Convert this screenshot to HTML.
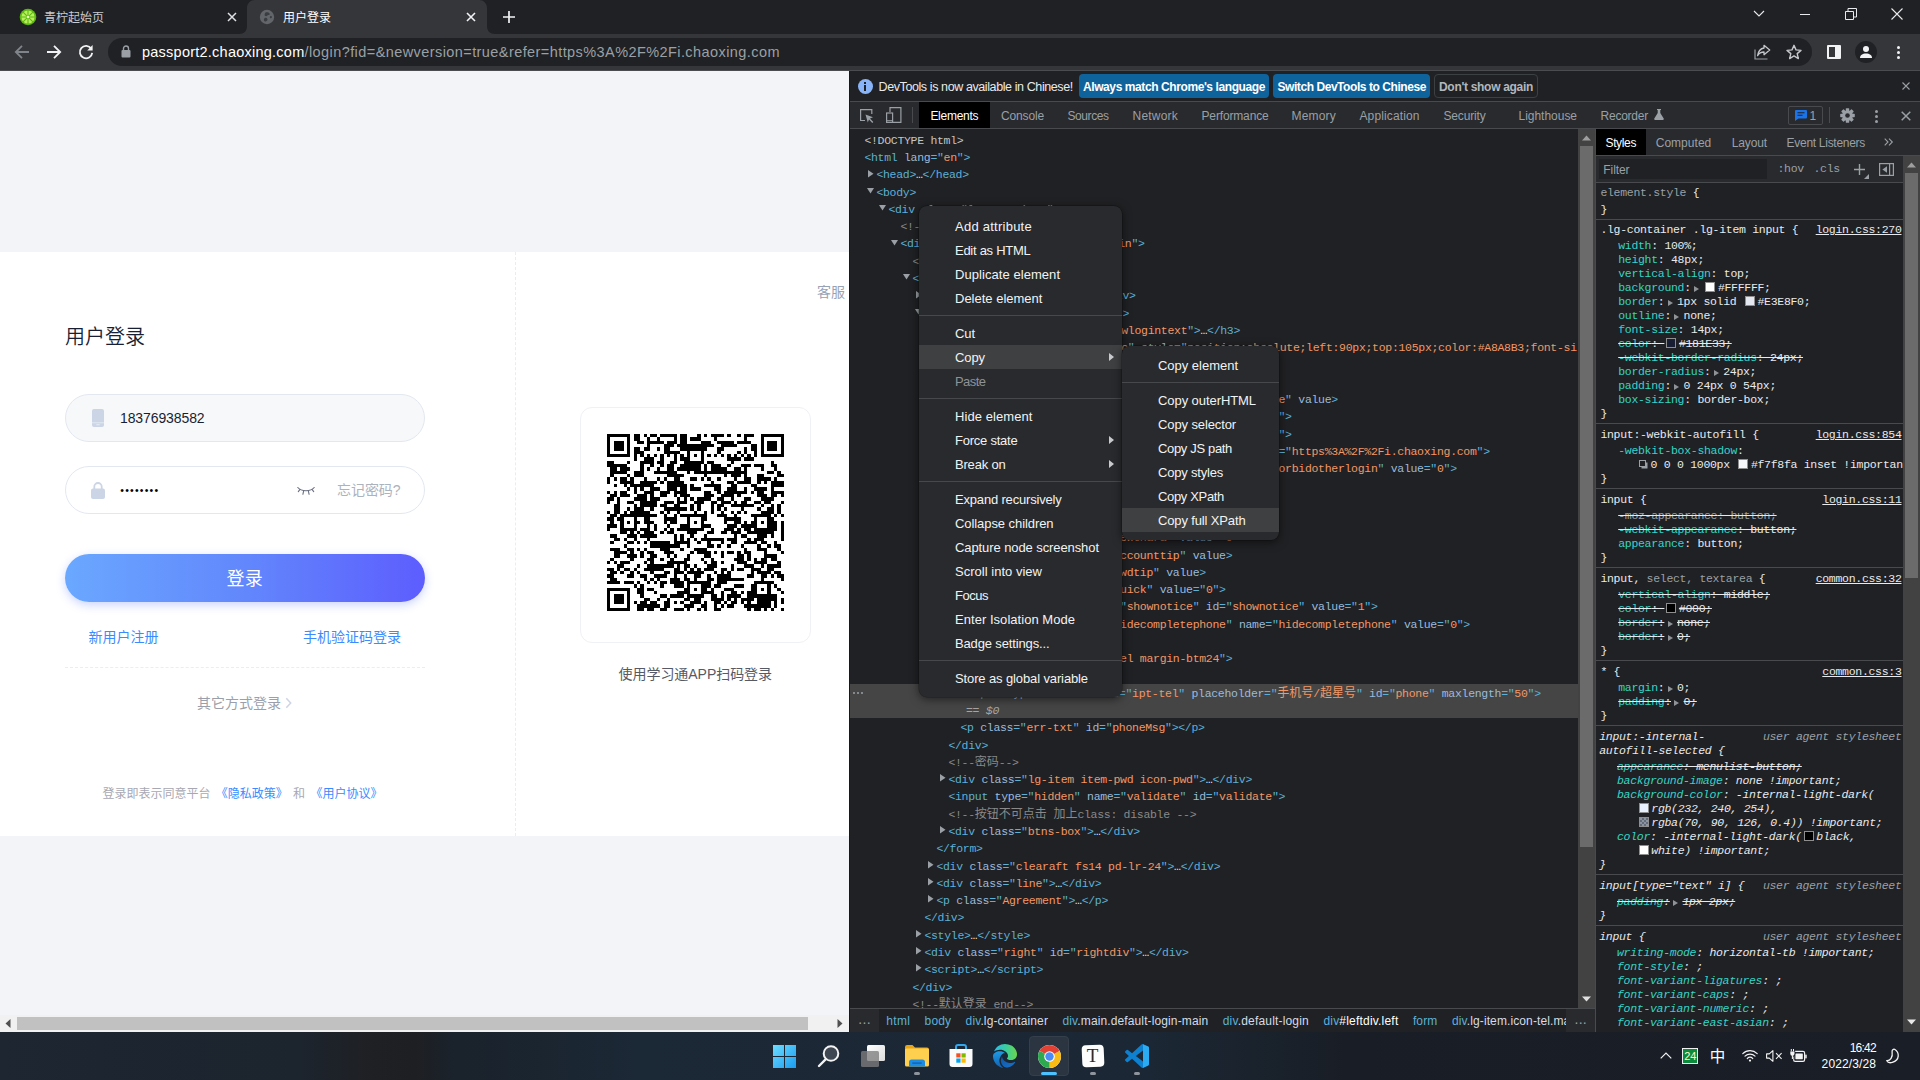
<!DOCTYPE html>
<html lang="zh-CN">
<head>
<meta charset="utf-8">
<title>用户登录</title>
<style>
*{margin:0;padding:0;box-sizing:content-box}
html,body{width:1920px;height:1080px;overflow:hidden;background:#202124}
body{position:relative;font-family:"Liberation Sans","Noto Sans CJK SC",sans-serif;font-size:12px;color:#e8eaed}
.abs{position:absolute;display:block}
.t{position:absolute;white-space:pre;display:block}
svg{overflow:visible}

.mono{font-family:"Liberation Mono","Noto Sans CJK SC",monospace;font-size:11.500px;letter-spacing:-.300px;white-space:pre}
.ln{position:absolute;height:17.28px;line-height:17.28px;color:#e8eaed}
.sl{position:absolute;height:14px;line-height:14px;color:#e8eaed}
.tg{color:#5db0d7}.an{color:#9bbbdc}.av{color:#f29766}.cm{color:#898989}.dt{color:#c4c4c4}
.cj{font-size:12px;letter-spacing:0;display:inline-block;width:12px;line-height:14px;vertical-align:baseline}
.pn{color:#35d4c7}.gy{color:#9aa0a6}.st{text-decoration:line-through}
.tri{display:inline-block;width:0;height:0;border-style:solid;border-color:transparent transparent transparent #8f9398;border-width:3.5px 0 3.5px 5.5px;margin:0 4.500px 0 3.100px;vertical-align:-0.500px}
.sw{display:inline-block;width:8px;height:8px;border:1px solid #8e8e8e;margin:0 2.500px 0 2px;vertical-align:-1px}
.lk{text-decoration:underline;color:#e8eaed}
.ua{font-style:italic;color:#9aa0a6}
.it{font-style:italic}
.sl.it{margin-left:-1.200px}
</style>
</head>
<body>
<!-- chrome -->
<div class="abs" style="left:0;top:0;width:1920px;height:34px;background:#202124"></div>
<div class="abs" style="left:0;top:34px;width:1920px;height:36px;background:#35363a"></div>
<div class="abs" style="left:0;top:70px;width:1920px;height:1px;background:#4b4c50"></div>
<svg class="abs" style="left:239px;top:0" width="256" height="34" viewBox="0 0 256 34"><path d="M0 34 C5 34 8 31 8 26 V8 C8 3.5 11.5 0 16 0 H240 C244.5 0 248 3.5 248 8 V26 C248 31 251 34 256 34 Z" fill="#35363a"/></svg>
<svg class="abs" style="left:19px;top:8px" width="18" height="18" viewBox="0 0 18 18"><circle cx="9" cy="9" r="8.3" fill="#5cb811"/><circle cx="9" cy="9" r="6.6" fill="#b9ef5c"/><g stroke="#5cb811" stroke-width="1.1"><path d="M9 2v14M2 9h14M4.05 4.05l9.9 9.9M13.95 4.05l-9.9 9.9"/></g><circle cx="9" cy="9" r="1.3" fill="#e9ffc0"/></svg>
<span class="t" style="left:44.0px;top:9.8px;font-size:12px;line-height:17px;color:#c8ccd1;">青柠起始页</span>
<svg class="abs" style="left:227px;top:12px" width="10" height="10" viewBox="0 0 10 10"><path d="M1 1l8 8M9 1l-8 8" stroke="#dfe1e5" stroke-width="1.5"/></svg>
<svg class="abs" style="left:259px;top:9px" width="16" height="16" viewBox="0 0 16 16"><circle cx="8" cy="8" r="7.200" fill="#62666b"/><path d="M7 3.300c1.300-.400 2.900.100 3.600 1.100.500.900-.400 1.600-1.400 1.700-.900.200-1.200 1.100-2.100 1.200-.900 0-1.700-.700-1.500-1.700.200-.900.500-2 1.400-2.300z" fill="#3b3d41"/><path d="M6.400 8.700c1-.100 2 .500 2.100 1.500.100 1-.600 1.900-1.600 2.200-.900.200-1.800-.300-2-1.200-.200-.900.400-2.300 1.500-2.500z" fill="#3b3d41"/><path d="M11.600 6.900c.700-.100 1.400.400 1.400 1.100 0 .700-.600 1.300-1.300 1.200-.600-.100-1-.700-.900-1.300.100-.500.400-.900.800-1z" fill="#3b3d41"/></svg>
<span class="t" style="left:283.0px;top:9.8px;font-size:12px;line-height:17px;color:#ffffff;">用户登录</span>
<svg class="abs" style="left:466px;top:12px" width="10" height="10" viewBox="0 0 10 10"><path d="M1 1l8 8M9 1l-8 8" stroke="#f1f3f4" stroke-width="1.6"/></svg>
<svg class="abs" style="left:503px;top:11px" width="12" height="12" viewBox="0 0 12 12"><path d="M6 0v12M0 6h12" stroke="#f1f3f4" stroke-width="1.7"/></svg>
<svg class="abs" style="left:1753px;top:9px" width="12" height="10" viewBox="0 0 12 10"><path d="M1 2l5 5 5-5" fill="none" stroke="#e8eaed" stroke-width="1.1"/></svg>
<div class="abs" style="left:1800px;top:14px;width:10px;height:1px;background:#e8eaed"></div>
<svg class="abs" style="left:1845px;top:8px" width="12" height="12" viewBox="0 0 12 12"><path d="M.5 3.500h8v8h-8zM3 3.500v-3h8.500v8.500h-3" fill="none" stroke="#e8eaed" stroke-width="1"/></svg>
<svg class="abs" style="left:1891px;top:8px" width="12" height="12" viewBox="0 0 12 12"><path d="M.5.500l11 11M11.500.500l-11 11" stroke="#e8eaed" stroke-width="1.1"/></svg>
<svg class="abs" style="left:14px;top:44px" width="16" height="16" viewBox="0 0 16 16"><path d="M15 8H2.500M8 1.800L1.800 8 8 14.200" fill="none" stroke="#80858b" stroke-width="1.8"/></svg>
<svg class="abs" style="left:46px;top:44px" width="16" height="16" viewBox="0 0 16 16"><path d="M1 8h12.500M8 1.800L14.200 8 8 14.200" fill="none" stroke="#f1f3f4" stroke-width="1.8"/></svg>
<svg class="abs" style="left:78px;top:44px" width="16" height="16" viewBox="0 0 16 16"><path d="M13.200 4.600A6.200 6.200 0 1 0 14.200 8.800" fill="none" stroke="#f1f3f4" stroke-width="1.8"/><path d="M14.600 1v5.400H9.200z" fill="#f1f3f4"/></svg>
<div class="abs" style="left:108px;top:38px;width:1704px;height:28px;border-radius:14px;background:#202124"></div>
<svg class="abs" style="left:121px;top:45px" width="10" height="13" viewBox="0 0 10 13"><rect x=".5" y="5" width="9" height="7.500" rx="1" fill="#9aa0a6"/><path d="M2.500 5.500V3.500a2.500 2.500 0 0 1 5 0v2" fill="none" stroke="#9aa0a6" stroke-width="1.400"/></svg>
<span class="t" style="left:142.0px;top:41.5px;font-size:14.5px;line-height:20px;color:#ffffff;letter-spacing:0.24px;">passport2.chaoxing.com</span>
<span class="t" style="left:304.5px;top:41.5px;font-size:14.5px;line-height:20px;color:#9aa0a6;letter-spacing:0.42px;">/login?fid=&amp;newversion=true&amp;refer=https%3A%2F%2Fi.chaoxing.com</span>
<svg class="abs" style="left:1754px;top:44px" width="17" height="16" viewBox="0 0 17 16"><path d="M1 5.500V15h12.500" fill="none" stroke="#9aa0a6" stroke-width="1.200"/><path d="M10 1.300l5.700 4.700-5.700 4.700V8C7 8 5 9.300 3.600 11.600 4.200 7.600 6.300 4.600 10 4z" fill="none" stroke="#c4c7cb" stroke-width="1.300" stroke-linejoin="round"/></svg>
<svg class="abs" style="left:1786px;top:44px" width="16" height="16" viewBox="0 0 16 16"><path d="M8 1.300l2 4.600 5 .450-3.800 3.300 1.150 4.900L8 11.950l-4.350 2.600L4.800 9.650 1 6.350l5-.450z" fill="none" stroke="#c4c7cb" stroke-width="1.400" stroke-linejoin="round"/></svg>
<div class="abs" style="left:1827px;top:45px;width:14px;height:14px;box-sizing:border-box;border:2px solid #f1f3f4;border-right-width:6px;border-radius:1px"></div>
<div class="abs" style="left:1855px;top:41px;width:22px;height:22px;border-radius:11px;background:#202124"></div>
<svg class="abs" style="left:1859px;top:45px" width="14" height="14" viewBox="0 0 14 14"><circle cx="7" cy="4" r="3" fill="#f1f3f4"/><path d="M1 13c0-3 2.500-4.500 6-4.500s6 1.500 6 4.500z" fill="#f1f3f4"/></svg>
<div class="abs" style="left:1896.500px;top:46px;width:3px;height:3px;border-radius:2px;background:#f1f3f4"></div>
<div class="abs" style="left:1896.500px;top:51px;width:3px;height:3px;border-radius:2px;background:#f1f3f4"></div>
<div class="abs" style="left:1896.500px;top:56px;width:3px;height:3px;border-radius:2px;background:#f1f3f4"></div>
<!-- page -->
<div class="abs" style="left:0;top:71px;width:849px;height:944px;background:#f2f4f7;overflow:hidden">
<div class="abs" style="left:0;top:181px;width:849px;height:584px;background:#fff"></div>
<div class="abs" style="left:515px;top:181px;width:0;height:584px;border-left:1px dashed #ececf0"></div>
</div>
<span class="t" style="left:65.0px;top:322.5px;font-size:20px;line-height:28px;color:#181e33;font-family:'Liberation Sans','Noto Sans CJK SC DemiLight','Noto Sans CJK SC',sans-serif;">用户登录</span>
<div class="abs" style="left:65px;top:394px;width:360px;height:48px;box-sizing:border-box;border:1px solid #e3e8f0;border-radius:24px;background:#f7f8fa"></div>
<svg class="abs" style="left:92px;top:409px" width="12" height="18" viewBox="0 0 12 18"><rect width="12" height="18" rx="2" fill="#ccd5e6"/><rect x="0" y="13.300" width="12" height="1" fill="#e2e8f3"/><rect x="4.200" y="15.200" width="3.600" height="1" rx=".5" fill="#e8edf6"/></svg>
<span class="t" style="left:120.0px;top:408.0px;font-size:14px;line-height:20px;color:#181e33;letter-spacing:-0.10px;">18376938582</span>
<div class="abs" style="left:65px;top:466px;width:360px;height:48px;box-sizing:border-box;border:1px solid #e3e8f0;border-radius:24px;background:#fff"></div>
<svg class="abs" style="left:91px;top:482px" width="14" height="17" viewBox="0 0 14 17"><path d="M3.300 7V4.700a3.700 3.700 0 0 1 7.400 0V7" fill="none" stroke="#ccd5e6" stroke-width="1.800"/><rect y="6.500" width="14" height="10.500" rx="2" fill="#ccd5e6"/></svg>
<span class="t" style="left:120.3px;top:480.3px;font-size:10.5px;line-height:20px;color:#000;letter-spacing:1.20px;">••••••••</span>
<svg class="abs" style="left:297px;top:486px" width="18" height="11" viewBox="0 0 18 11"><g fill="none" stroke="#6b7080" stroke-width="1.100" stroke-linecap="round"><path d="M.8 1.500c3.500 4.300 12.900 4.300 16.400 0"/><path d="M2.800 3.600L1.300 5.600M6.600 5.200L5.900 8.300M11.400 5.200l.7 3.100M15.200 3.600l1.500 2"/></g></svg>
<span class="t" style="left:337.0px;top:480.0px;font-size:14px;line-height:20px;color:#acb2be;letter-spacing:-0.06px;">忘记密码?</span>
<div class="abs" style="left:65px;top:554px;width:360px;height:48px;border-radius:24px;background:linear-gradient(90deg,#6aa8ff 0%,#6287fc 50%,#5d5dfe 100%);box-shadow:0 3px 10px rgba(92,120,255,.32)"></div>
<span class="t" style="left:226.5px;top:565.5px;font-size:18px;line-height:26px;color:#fff;letter-spacing:0.25px;">登录</span>
<span class="t" style="left:88.5px;top:627.0px;font-size:14px;line-height:20px;color:#3a8bff;">新用户注册</span>
<span class="t" style="left:303.0px;top:627.0px;font-size:14px;line-height:20px;color:#3a8bff;">手机验证码登录</span>
<div class="abs" style="left:65px;top:667px;width:360px;height:0;border-top:1px dashed #ebedf0"></div>
<span class="t" style="left:197.0px;top:693.0px;font-size:14px;line-height:20px;color:#9b9fab;">其它方式登录</span>
<svg class="abs" style="left:285px;top:697px" width="7" height="12" viewBox="0 0 7 12"><path d="M1.300 1.300L5.700 6 1.300 10.700" fill="none" stroke="#cdd4e4" stroke-width="1.500"/></svg>
<span class="t" style="left:102.5px;top:784.5px;font-size:12px;line-height:18px;color:#a8a8b3;">登录即表示同意平台</span>
<span class="t" style="left:215.8px;top:784.5px;font-size:12px;line-height:18px;color:#3a8bff;">《隐私政策》</span>
<span class="t" style="left:293.0px;top:784.5px;font-size:12px;line-height:18px;color:#a8a8b3;letter-spacing:-0.02px;">和</span>
<span class="t" style="left:310.4px;top:784.5px;font-size:12px;line-height:18px;color:#3a8bff;">《用户协议》</span>
<span class="t" style="left:817.0px;top:282.0px;font-size:14px;line-height:20px;color:#98a2b5;clip-path:inset(0 0 0 0);">客服</span>
<div class="abs" style="left:580px;top:407px;width:231px;height:236px;box-sizing:border-box;border:1px solid #f0f1f5;border-radius:12px;background:#fff"></div>
<svg class="abs" style="left:607px;top:434px" width="177" height="177" viewBox="0 0 53 53" shape-rendering="crispEdges"><path d="M0 0h7v1h-7zM8 0h2v1h-2zM11 0h1v1h-1zM13 0h2v1h-2zM16 0h5v1h-5zM22 0h2v1h-2zM27 0h1v1h-1zM29 0h1v1h-1zM31 0h4v1h-4zM36 0h1v1h-1zM39 0h1v1h-1zM41 0h3v1h-3zM46 0h7v1h-7zM0 1h1v1h-1zM6 1h1v1h-1zM8 1h2v1h-2zM12 1h1v1h-1zM15 1h1v1h-1zM20 1h1v1h-1zM22 1h2v1h-2zM25 1h3v1h-3zM32 1h1v1h-1zM41 1h1v1h-1zM46 1h1v1h-1zM52 1h1v1h-1zM0 2h1v1h-1zM2 2h3v1h-3zM6 2h1v1h-1zM9 2h2v1h-2zM12 2h5v1h-5zM18 2h3v1h-3zM22 2h2v1h-2zM28 2h3v1h-3zM33 2h5v1h-5zM39 2h4v1h-4zM46 2h1v1h-1zM48 2h3v1h-3zM52 2h1v1h-1zM0 3h1v1h-1zM2 3h3v1h-3zM6 3h1v1h-1zM12 3h1v1h-1zM17 3h3v1h-3zM21 3h11v1h-11zM34 3h5v1h-5zM43 3h2v1h-2zM46 3h1v1h-1zM48 3h3v1h-3zM52 3h1v1h-1zM0 4h1v1h-1zM2 4h3v1h-3zM6 4h1v1h-1zM8 4h2v1h-2zM11 4h2v1h-2zM15 4h1v1h-1zM17 4h2v1h-2zM22 4h8v1h-8zM33 4h2v1h-2zM41 4h1v1h-1zM43 4h2v1h-2zM46 4h1v1h-1zM48 4h3v1h-3zM52 4h1v1h-1zM0 5h1v1h-1zM6 5h1v1h-1zM8 5h3v1h-3zM17 5h5v1h-5zM24 5h1v1h-1zM28 5h1v1h-1zM33 5h1v1h-1zM39 5h1v1h-1zM41 5h1v1h-1zM44 5h1v1h-1zM46 5h1v1h-1zM52 5h1v1h-1zM0 6h7v1h-7zM8 6h1v1h-1zM10 6h1v1h-1zM12 6h1v1h-1zM14 6h1v1h-1zM16 6h1v1h-1zM18 6h1v1h-1zM20 6h1v1h-1zM22 6h1v1h-1zM24 6h1v1h-1zM26 6h1v1h-1zM28 6h1v1h-1zM30 6h1v1h-1zM32 6h1v1h-1zM34 6h1v1h-1zM36 6h1v1h-1zM38 6h1v1h-1zM40 6h1v1h-1zM42 6h1v1h-1zM44 6h1v1h-1zM46 6h7v1h-7zM8 7h1v1h-1zM11 7h3v1h-3zM16 7h1v1h-1zM20 7h1v1h-1zM22 7h3v1h-3zM28 7h1v1h-1zM36 7h4v1h-4zM41 7h3v1h-3zM0 8h2v1h-2zM6 8h1v1h-1zM10 8h4v1h-4zM15 8h2v1h-2zM19 8h2v1h-2zM23 8h6v1h-6zM30 8h2v1h-2zM37 8h1v1h-1zM49 8h1v1h-1zM0 9h6v1h-6zM10 9h1v1h-1zM13 9h1v1h-1zM16 9h1v1h-1zM18 9h2v1h-2zM22 9h6v1h-6zM29 9h1v1h-1zM31 9h3v1h-3zM36 9h1v1h-1zM40 9h3v1h-3zM44 9h3v1h-3zM49 9h2v1h-2zM1 10h2v1h-2zM4 10h3v1h-3zM10 10h1v1h-1zM12 10h1v1h-1zM15 10h1v1h-1zM18 10h2v1h-2zM21 10h7v1h-7zM29 10h1v1h-1zM31 10h5v1h-5zM38 10h2v1h-2zM41 10h1v1h-1zM46 10h1v1h-1zM50 10h1v1h-1zM1 11h5v1h-5zM8 11h3v1h-3zM14 11h7v1h-7zM24 11h1v1h-1zM26 11h16v1h-16zM48 11h2v1h-2zM51 11h1v1h-1zM1 12h1v1h-1zM6 12h1v1h-1zM8 12h3v1h-3zM18 12h5v1h-5zM29 12h1v1h-1zM35 12h1v1h-1zM37 12h3v1h-3zM41 12h1v1h-1zM45 12h2v1h-2zM51 12h2v1h-2zM0 13h1v1h-1zM2 13h1v1h-1zM4 13h2v1h-2zM7 13h1v1h-1zM11 13h1v1h-1zM15 13h1v1h-1zM17 13h1v1h-1zM20 13h2v1h-2zM25 13h2v1h-2zM28 13h1v1h-1zM30 13h1v1h-1zM33 13h1v1h-1zM38 13h1v1h-1zM41 13h2v1h-2zM45 13h4v1h-4zM50 13h1v1h-1zM0 14h1v1h-1zM4 14h4v1h-4zM10 14h5v1h-5zM16 14h1v1h-1zM18 14h5v1h-5zM31 14h1v1h-1zM36 14h2v1h-2zM39 14h4v1h-4zM45 14h1v1h-1zM47 14h1v1h-1zM49 14h4v1h-4zM2 15h1v1h-1zM5 15h1v1h-1zM7 15h7v1h-7zM18 15h6v1h-6zM25 15h1v1h-1zM29 15h5v1h-5zM37 15h2v1h-2zM43 15h2v1h-2zM49 15h4v1h-4zM6 16h1v1h-1zM8 16h1v1h-1zM10 16h1v1h-1zM13 16h3v1h-3zM18 16h3v1h-3zM22 16h2v1h-2zM25 16h3v1h-3zM32 16h2v1h-2zM36 16h3v1h-3zM41 16h1v1h-1zM44 16h4v1h-4zM49 16h1v1h-1zM0 17h1v1h-1zM2 17h1v1h-1zM4 17h2v1h-2zM8 17h1v1h-1zM11 17h3v1h-3zM16 17h3v1h-3zM20 17h4v1h-4zM29 17h2v1h-2zM33 17h1v1h-1zM35 17h7v1h-7zM43 17h1v1h-1zM45 17h2v1h-2zM49 17h4v1h-4zM1 18h2v1h-2zM4 18h3v1h-3zM9 18h3v1h-3zM13 18h1v1h-1zM16 18h2v1h-2zM20 18h1v1h-1zM22 18h3v1h-3zM29 18h3v1h-3zM34 18h4v1h-4zM39 18h1v1h-1zM45 18h3v1h-3zM49 18h2v1h-2zM52 18h1v1h-1zM0 19h2v1h-2zM3 19h1v1h-1zM8 19h4v1h-4zM13 19h3v1h-3zM21 19h1v1h-1zM23 19h1v1h-1zM25 19h1v1h-1zM27 19h4v1h-4zM33 19h2v1h-2zM37 19h1v1h-1zM41 19h2v1h-2zM46 19h4v1h-4zM0 20h1v1h-1zM3 20h1v1h-1zM6 20h2v1h-2zM10 20h5v1h-5zM17 20h3v1h-3zM21 20h3v1h-3zM26 20h3v1h-3zM31 20h2v1h-2zM34 20h3v1h-3zM38 20h1v1h-1zM40 20h2v1h-2zM44 20h2v1h-2zM47 20h2v1h-2zM52 20h1v1h-1zM2 21h2v1h-2zM8 21h1v1h-1zM10 21h5v1h-5zM16 21h2v1h-2zM20 21h2v1h-2zM25 21h1v1h-1zM27 21h1v1h-1zM31 21h1v1h-1zM33 21h2v1h-2zM37 21h7v1h-7zM46 21h1v1h-1zM49 21h1v1h-1zM51 21h1v1h-1zM2 22h2v1h-2zM6 22h1v1h-1zM8 22h3v1h-3zM13 22h1v1h-1zM17 22h7v1h-7zM25 22h1v1h-1zM27 22h1v1h-1zM31 22h1v1h-1zM33 22h1v1h-1zM35 22h1v1h-1zM40 22h1v1h-1zM45 22h1v1h-1zM48 22h2v1h-2zM51 22h1v1h-1zM0 23h1v1h-1zM2 23h2v1h-2zM5 23h1v1h-1zM7 23h6v1h-6zM16 23h1v1h-1zM18 23h1v1h-1zM21 23h1v1h-1zM26 23h1v1h-1zM29 23h1v1h-1zM31 23h1v1h-1zM34 23h1v1h-1zM37 23h1v1h-1zM39 23h1v1h-1zM41 23h1v1h-1zM46 23h4v1h-4zM51 23h1v1h-1zM1 24h2v1h-2zM4 24h11v1h-11zM17 24h1v1h-1zM20 24h1v1h-1zM22 24h8v1h-8zM33 24h3v1h-3zM38 24h1v1h-1zM43 24h6v1h-6zM50 24h1v1h-1zM52 24h1v1h-1zM0 25h2v1h-2zM3 25h2v1h-2zM8 25h1v1h-1zM11 25h2v1h-2zM17 25h4v1h-4zM24 25h1v1h-1zM28 25h2v1h-2zM35 25h5v1h-5zM44 25h1v1h-1zM48 25h2v1h-2zM1 26h1v1h-1zM4 26h1v1h-1zM6 26h1v1h-1zM8 26h2v1h-2zM11 26h3v1h-3zM17 26h1v1h-1zM19 26h2v1h-2zM24 26h1v1h-1zM26 26h1v1h-1zM28 26h1v1h-1zM35 26h1v1h-1zM38 26h2v1h-2zM41 26h1v1h-1zM43 26h2v1h-2zM46 26h1v1h-1zM48 26h3v1h-3zM52 26h1v1h-1zM0 27h3v1h-3zM4 27h1v1h-1zM8 27h1v1h-1zM12 27h1v1h-1zM14 27h1v1h-1zM18 27h1v1h-1zM22 27h3v1h-3zM28 27h3v1h-3zM36 27h3v1h-3zM40 27h5v1h-5zM48 27h3v1h-3zM52 27h1v1h-1zM0 28h1v1h-1zM4 28h5v1h-5zM10 28h3v1h-3zM14 28h1v1h-1zM17 28h1v1h-1zM19 28h1v1h-1zM21 28h8v1h-8zM31 28h1v1h-1zM35 28h3v1h-3zM39 28h1v1h-1zM41 28h2v1h-2zM44 28h7v1h-7zM52 28h1v1h-1zM4 29h2v1h-2zM7 29h1v1h-1zM9 29h1v1h-1zM11 29h3v1h-3zM16 29h1v1h-1zM18 29h2v1h-2zM24 29h3v1h-3zM30 29h2v1h-2zM34 29h2v1h-2zM37 29h3v1h-3zM42 29h8v1h-8zM52 29h1v1h-1zM1 30h2v1h-2zM6 30h3v1h-3zM10 30h5v1h-5zM20 30h1v1h-1zM22 30h1v1h-1zM25 30h1v1h-1zM29 30h1v1h-1zM38 30h1v1h-1zM40 30h2v1h-2zM45 30h3v1h-3zM49 30h1v1h-1zM52 30h1v1h-1zM2 31h2v1h-2zM5 31h1v1h-1zM8 31h1v1h-1zM12 31h1v1h-1zM20 31h1v1h-1zM22 31h1v1h-1zM24 31h1v1h-1zM26 31h1v1h-1zM28 31h7v1h-7zM36 31h3v1h-3zM42 31h1v1h-1zM44 31h3v1h-3zM52 31h1v1h-1zM1 32h1v1h-1zM6 32h2v1h-2zM9 32h1v1h-1zM11 32h1v1h-1zM13 32h6v1h-6zM20 32h5v1h-5zM27 32h1v1h-1zM30 32h1v1h-1zM34 32h1v1h-1zM37 32h2v1h-2zM41 32h4v1h-4zM46 32h2v1h-2zM50 32h1v1h-1zM5 33h1v1h-1zM13 33h9v1h-9zM24 33h1v1h-1zM30 33h2v1h-2zM33 33h1v1h-1zM36 33h1v1h-1zM40 33h1v1h-1zM45 33h1v1h-1zM48 33h1v1h-1zM50 33h2v1h-2zM1 34h3v1h-3zM6 34h2v1h-2zM9 34h1v1h-1zM11 34h1v1h-1zM16 34h3v1h-3zM22 34h1v1h-1zM26 34h4v1h-4zM41 34h1v1h-1zM45 34h3v1h-3zM51 34h1v1h-1zM2 35h4v1h-4zM7 35h1v1h-1zM10 35h1v1h-1zM12 35h2v1h-2zM17 35h3v1h-3zM25 35h1v1h-1zM27 35h4v1h-4zM32 35h1v1h-1zM34 35h1v1h-1zM36 35h2v1h-2zM39 35h1v1h-1zM41 35h2v1h-2zM47 35h1v1h-1zM52 35h1v1h-1zM2 36h2v1h-2zM6 36h3v1h-3zM10 36h1v1h-1zM13 36h2v1h-2zM18 36h1v1h-1zM20 36h1v1h-1zM24 36h1v1h-1zM29 36h2v1h-2zM34 36h1v1h-1zM39 36h2v1h-2zM42 36h1v1h-1zM47 36h4v1h-4zM1 37h1v1h-1zM7 37h1v1h-1zM12 37h2v1h-2zM16 37h1v1h-1zM19 37h1v1h-1zM23 37h2v1h-2zM28 37h1v1h-1zM31 37h1v1h-1zM38 37h3v1h-3zM42 37h1v1h-1zM44 37h1v1h-1zM46 37h2v1h-2zM49 37h2v1h-2zM0 38h1v1h-1zM2 38h1v1h-1zM4 38h3v1h-3zM11 38h1v1h-1zM13 38h1v1h-1zM18 38h6v1h-6zM29 38h1v1h-1zM31 38h2v1h-2zM34 38h1v1h-1zM39 38h3v1h-3zM44 38h4v1h-4zM51 38h1v1h-1zM3 39h2v1h-2zM9 39h1v1h-1zM12 39h8v1h-8zM21 39h1v1h-1zM23 39h2v1h-2zM26 39h1v1h-1zM30 39h3v1h-3zM37 39h1v1h-1zM41 39h3v1h-3zM46 39h1v1h-1zM48 39h4v1h-4zM0 40h2v1h-2zM3 40h1v1h-1zM5 40h2v1h-2zM8 40h1v1h-1zM11 40h6v1h-6zM20 40h2v1h-2zM23 40h1v1h-1zM25 40h1v1h-1zM27 40h1v1h-1zM29 40h3v1h-3zM34 40h2v1h-2zM37 40h1v1h-1zM39 40h2v1h-2zM43 40h3v1h-3zM48 40h2v1h-2zM1 41h2v1h-2zM4 41h1v1h-1zM7 41h1v1h-1zM9 41h1v1h-1zM13 41h1v1h-1zM17 41h2v1h-2zM20 41h3v1h-3zM24 41h5v1h-5zM32 41h1v1h-1zM34 41h1v1h-1zM36 41h1v1h-1zM43 41h1v1h-1zM45 41h4v1h-4zM50 41h2v1h-2zM0 42h2v1h-2zM6 42h2v1h-2zM10 42h2v1h-2zM14 42h4v1h-4zM20 42h1v1h-1zM23 42h1v1h-1zM26 42h2v1h-2zM30 42h1v1h-1zM33 42h4v1h-4zM42 42h2v1h-2zM46 42h2v1h-2zM49 42h1v1h-1zM51 42h2v1h-2zM1 43h2v1h-2zM11 43h1v1h-1zM13 43h1v1h-1zM15 43h1v1h-1zM19 43h3v1h-3zM23 43h2v1h-2zM26 43h1v1h-1zM30 43h2v1h-2zM33 43h8v1h-8zM46 43h1v1h-1zM52 43h1v1h-1zM0 44h4v1h-4zM5 44h3v1h-3zM9 44h1v1h-1zM12 44h1v1h-1zM14 44h1v1h-1zM16 44h2v1h-2zM19 44h4v1h-4zM24 44h7v1h-7zM33 44h3v1h-3zM44 44h6v1h-6zM8 45h1v1h-1zM10 45h1v1h-1zM16 45h1v1h-1zM20 45h3v1h-3zM24 45h1v1h-1zM28 45h3v1h-3zM32 45h2v1h-2zM38 45h3v1h-3zM43 45h2v1h-2zM48 45h1v1h-1zM50 45h1v1h-1zM0 46h7v1h-7zM9 46h2v1h-2zM12 46h2v1h-2zM23 46h2v1h-2zM26 46h1v1h-1zM28 46h2v1h-2zM31 46h1v1h-1zM35 46h3v1h-3zM43 46h2v1h-2zM46 46h1v1h-1zM48 46h1v1h-1zM51 46h1v1h-1zM0 47h1v1h-1zM6 47h1v1h-1zM9 47h2v1h-2zM14 47h1v1h-1zM21 47h4v1h-4zM28 47h4v1h-4zM34 47h1v1h-1zM37 47h2v1h-2zM40 47h1v1h-1zM42 47h3v1h-3zM48 47h1v1h-1zM52 47h1v1h-1zM0 48h1v1h-1zM2 48h3v1h-3zM6 48h1v1h-1zM10 48h1v1h-1zM16 48h2v1h-2zM19 48h4v1h-4zM24 48h5v1h-5zM31 48h2v1h-2zM34 48h1v1h-1zM36 48h4v1h-4zM42 48h9v1h-9zM0 49h1v1h-1zM2 49h3v1h-3zM6 49h1v1h-1zM11 49h2v1h-2zM15 49h1v1h-1zM18 49h1v1h-1zM23 49h2v1h-2zM26 49h2v1h-2zM31 49h4v1h-4zM36 49h1v1h-1zM38 49h1v1h-1zM40 49h4v1h-4zM45 49h6v1h-6zM52 49h1v1h-1zM0 50h1v1h-1zM2 50h3v1h-3zM6 50h1v1h-1zM8 50h1v1h-1zM10 50h2v1h-2zM13 50h2v1h-2zM17 50h2v1h-2zM20 50h1v1h-1zM22 50h1v1h-1zM25 50h3v1h-3zM29 50h1v1h-1zM32 50h2v1h-2zM35 50h1v1h-1zM37 50h2v1h-2zM40 50h1v1h-1zM42 50h1v1h-1zM45 50h4v1h-4zM50 50h1v1h-1zM52 50h1v1h-1zM0 51h1v1h-1zM6 51h1v1h-1zM9 51h7v1h-7zM17 51h2v1h-2zM23 51h3v1h-3zM28 51h2v1h-2zM32 51h1v1h-1zM34 51h1v1h-1zM36 51h2v1h-2zM41 51h8v1h-8zM50 51h1v1h-1zM0 52h7v1h-7zM9 52h2v1h-2zM12 52h2v1h-2zM16 52h2v1h-2zM20 52h3v1h-3zM24 52h1v1h-1zM27 52h1v1h-1zM29 52h1v1h-1zM32 52h2v1h-2zM42 52h1v1h-1zM44 52h2v1h-2zM47 52h1v1h-1zM49 52h1v1h-1zM52 52h1v1h-1z" fill="#000"/></svg>
<span class="t" style="left:618.5px;top:664.0px;font-size:14px;line-height:20px;color:#555a66;letter-spacing:-0.04px;">使用学习通APP扫码登录</span>
<div class="abs" style="left:0;top:1015px;width:849px;height:17px;background:#f1f1f1"></div>
<div class="abs" style="left:17px;top:1017px;width:791px;height:13px;background:#c1c1c1"></div>
<svg class="abs" style="left:5px;top:1019px" width="6" height="9" viewBox="0 0 6 9"><path d="M5.500 0v9L.5 4.500z" fill="#505050"/></svg>
<svg class="abs" style="left:837px;top:1019px" width="6" height="9" viewBox="0 0 6 9"><path d="M.5 0v9l5-4.500z" fill="#505050"/></svg>
<!-- devtools -->
<div class="abs" style="left:849px;top:71px;width:1071px;height:961px;background:#202124"></div>
<div class="abs" style="left:849px;top:71px;width:1px;height:961px;background:#17181a"></div>
<div class="abs" style="left:850px;top:101px;width:1070px;height:1px;background:#494a4d"></div>
<div class="abs" style="left:857.500px;top:78.500px;width:15px;height:15px;border-radius:8px;background:#8ab4f8"></div>
<div class="abs" style="left:864px;top:81.500px;width:2px;height:2px;background:#202124"></div>
<div class="abs" style="left:864px;top:85px;width:2px;height:5.500px;background:#202124"></div>
<span class="t" style="left:878.5px;top:78.0px;font-size:12.5px;line-height:18px;color:#e8eaed;letter-spacing:-0.40px;">DevTools is now available in Chinese!</span>
<div class="abs" style="left:1079px;top:74px;width:190px;height:24px;border-radius:4px;background:#0f639c"></div>
<span class="t" style="left:1083.0px;top:78.0px;font-size:12px;line-height:18px;color:#ffffff;font-weight:700;letter-spacing:-0.41px;">Always match Chrome's language</span>
<div class="abs" style="left:1273px;top:74px;width:157px;height:24px;border-radius:4px;background:#0f639c"></div>
<span class="t" style="left:1277.5px;top:78.0px;font-size:12px;line-height:18px;color:#ffffff;font-weight:700;letter-spacing:-0.44px;">Switch DevTools to Chinese</span>
<div class="abs" style="left:1434px;top:74px;width:104px;height:24px;box-sizing:border-box;border:1px solid #3c4043;border-radius:4px"></div>
<span class="t" style="left:1439.0px;top:78.0px;font-size:12px;line-height:18px;color:#b3b7bc;font-weight:700;letter-spacing:-0.30px;">Don't show again</span>
<svg class="abs" style="left:1902px;top:82px" width="8" height="8" viewBox="0 0 8 8"><path d="M.5.500l7 7M7.500.500l-7 7" stroke="#9aa0a6" stroke-width="1.100"/></svg>
<div class="abs" style="left:850px;top:102px;width:1070px;height:26px;background:#292a2d"></div>
<div class="abs" style="left:850px;top:128px;width:1070px;height:1px;background:#494a4d"></div>
<div class="abs" style="left:919px;top:102px;width:71px;height:26px;background:#000"></div>
<svg class="abs" style="left:860px;top:109px" width="14" height="14" viewBox="0 0 14 14"><path d="M5 11.500H.6V.6h11.200V5" fill="none" stroke="#9aa0a6" stroke-width="1.200"/><path d="M5.500 5.500l7.500 2.800-3 1.300 3.300 3.300-1 1-3.300-3.300-1.200 3z" fill="#9aa0a6"/></svg>
<svg class="abs" style="left:886px;top:107px" width="16" height="16" viewBox="0 0 16 16"><path d="M4 5V.6h10.900v14.800H7" fill="none" stroke="#9aa0a6" stroke-width="1.200"/><rect x=".6" y="6" width="6" height="9.400" fill="none" stroke="#9aa0a6" stroke-width="1.200"/><rect x=".6" y="13.200" width="6" height="1" fill="#9aa0a6"/></svg>
<div class="abs" style="left:912px;top:107px;width:1px;height:16px;background:#494a4d"></div>
<span class="t" style="left:930.4px;top:106.5px;font-size:12px;line-height:18px;color:#ffffff;letter-spacing:-0.27px;">Elements</span>
<span class="t" style="left:1001.0px;top:106.5px;font-size:12px;line-height:18px;color:#9aa0a6;letter-spacing:-0.15px;">Console</span>
<span class="t" style="left:1067.5px;top:106.5px;font-size:12px;line-height:18px;color:#9aa0a6;letter-spacing:-0.43px;">Sources</span>
<span class="t" style="left:1132.5px;top:106.5px;font-size:12px;line-height:18px;color:#9aa0a6;letter-spacing:0.21px;">Network</span>
<span class="t" style="left:1201.5px;top:106.5px;font-size:12px;line-height:18px;color:#9aa0a6;letter-spacing:-0.15px;">Performance</span>
<span class="t" style="left:1291.5px;top:106.5px;font-size:12px;line-height:18px;color:#9aa0a6;letter-spacing:0.19px;">Memory</span>
<span class="t" style="left:1359.5px;top:106.5px;font-size:12px;line-height:18px;color:#9aa0a6;letter-spacing:0.12px;">Application</span>
<span class="t" style="left:1443.5px;top:106.5px;font-size:12px;line-height:18px;color:#9aa0a6;letter-spacing:-0.17px;">Security</span>
<span class="t" style="left:1518.5px;top:106.5px;font-size:12px;line-height:18px;color:#9aa0a6;letter-spacing:-0.02px;">Lighthouse</span>
<span class="t" style="left:1600.5px;top:106.5px;font-size:12px;line-height:18px;color:#9aa0a6;letter-spacing:-0.23px;">Recorder</span>
<svg class="abs" style="left:1654px;top:109px" width="10" height="11" viewBox="0 0 10 11"><path d="M3 0h4v1h-.7v3L9.700 9.500c.4.700 0 1.500-.9 1.500H1.200c-.9 0-1.300-.8-.9-1.500L3.700 4V1H3z" fill="#9aa0a6"/></svg>
<div class="abs" style="left:1788px;top:106px;width:35px;height:19px;box-sizing:border-box;border:1px solid #494a4d;border-radius:2px"></div>
<svg class="abs" style="left:1795px;top:110px" width="12" height="11" viewBox="0 0 12 11"><path d="M1 0h10a1 1 0 0 1 1 1v6.500a1 1 0 0 1-1 1H3.500L0 11V1a1 1 0 0 1 1-1z" fill="#1a73e8"/><path d="M2.500 2.700h7M2.500 5.200h5" stroke="#202124" stroke-width="1.100"/></svg>
<span class="t" style="left:1809.5px;top:107.0px;font-size:12px;line-height:18px;color:#9aa0a6;letter-spacing:-0.69px;">1</span>
<div class="abs" style="left:1829px;top:107px;width:1px;height:16px;background:#494a4d"></div>
<svg class="abs" style="left:1840px;top:108px" width="15" height="15" viewBox="0 0 15 15"><g transform="translate(7.500 7.500)"><g fill="#9aa0a6"><rect x="-1.700" y="-7.300" width="3.400" height="4" rx=".6" transform="rotate(0)"/><rect x="-1.700" y="-7.300" width="3.400" height="4" rx=".6" transform="rotate(45)"/><rect x="-1.700" y="-7.300" width="3.400" height="4" rx=".6" transform="rotate(90)"/><rect x="-1.700" y="-7.300" width="3.400" height="4" rx=".6" transform="rotate(135)"/><rect x="-1.700" y="-7.300" width="3.400" height="4" rx=".6" transform="rotate(180)"/><rect x="-1.700" y="-7.300" width="3.400" height="4" rx=".6" transform="rotate(225)"/><rect x="-1.700" y="-7.300" width="3.400" height="4" rx=".6" transform="rotate(270)"/><rect x="-1.700" y="-7.300" width="3.400" height="4" rx=".6" transform="rotate(315)"/></g><circle r="5.300" fill="#9aa0a6"/><circle r="2.300" fill="#292a2d"/></g></svg>
<div class="abs" style="left:1874.500px;top:109.5px;width:3px;height:3px;border-radius:2px;background:#9aa0a6"></div>
<div class="abs" style="left:1874.500px;top:114.5px;width:3px;height:3px;border-radius:2px;background:#9aa0a6"></div>
<div class="abs" style="left:1874.500px;top:119.5px;width:3px;height:3px;border-radius:2px;background:#9aa0a6"></div>
<svg class="abs" style="left:1900.500px;top:110.500px" width="10" height="10" viewBox="0 0 10 10"><path d="M.7.700l8.600 8.600M9.300.700L.7 9.300" stroke="#9aa0a6" stroke-width="1.500"/></svg>
<div class="abs" style="left:850px;top:129px;width:728px;height:879px;overflow:hidden">
<div class="abs" style="left:-850px;top:-129px;width:1920px;height:1080px">
<div class="abs" style="left:850px;top:684.00px;width:728px;height:34px;background:#454545"></div>
<div class="ln mono" style="left:864.4px;top:131.81px"><span class="dt">&lt;!DOCTYPE html&gt;</span></div>
<div class="ln mono" style="left:864.4px;top:149.09px"><span class="tg">&lt;html <span class="an">lang</span>=&quot;<span class="av">en</span>&quot;&gt;</span></div>
<svg class="abs" style="left:868.0px;top:169.5px" width="5.500" height="7.600" viewBox="0 0 5.500 7.600"><path d="M0 0L5.500 3.800 0 7.600z" fill="#9aa0a6"/></svg><div class="ln mono" style="left:876.4px;top:166.37px"><span class="tg">&lt;head&gt;</span><span>…</span><span class="tg">&lt;/head&gt;</span></div>
<svg class="abs" style="left:867.0px;top:187.9px" width="7" height="5.400" viewBox="0 0 7 5.400"><path d="M0 0h7L3.500 5.400z" fill="#9aa0a6"/></svg><div class="ln mono" style="left:876.4px;top:183.65px"><span class="tg">&lt;body&gt;</span></div>
<svg class="abs" style="left:879.0px;top:205.2px" width="7" height="5.400" viewBox="0 0 7 5.400"><path d="M0 0h7L3.500 5.400z" fill="#9aa0a6"/></svg><div class="ln mono" style="left:888.4px;top:200.93px"><span class="tg">&lt;div <span class="an">class</span>=&quot;<span class="av">lg-container</span>&quot;&gt;</span></div>
<div class="ln mono" style="left:900.4px;top:218.21px"><span class="cm">&lt;!--<span class="cj">默</span><span class="cj">认</span><span class="cj">登</span><span class="cj">录</span>--&gt;</span></div>
<svg class="abs" style="left:891.0px;top:239.7px" width="7" height="5.400" viewBox="0 0 7 5.400"><path d="M0 0h7L3.500 5.400z" fill="#9aa0a6"/></svg><div class="ln mono" style="left:900.4px;top:235.49px"><span class="tg">&lt;div <span class="an">class</span>=&quot;<span class="av">main default-login-main</span>&quot;&gt;</span></div>
<div class="ln mono" style="left:912.4px;top:252.77px"><span class="cm">&lt;!--<span class="cj">默</span><span class="cj">认</span><span class="cj">登</span><span class="cj">录</span> start--&gt;</span></div>
<svg class="abs" style="left:903.0px;top:274.3px" width="7" height="5.400" viewBox="0 0 7 5.400"><path d="M0 0h7L3.500 5.400z" fill="#9aa0a6"/></svg><div class="ln mono" style="left:912.4px;top:270.05px"><span class="tg">&lt;div <span class="an">class</span>=&quot;<span class="av">default-login</span>&quot;&gt;</span></div>
<svg class="abs" style="left:916.0px;top:290.5px" width="5.500" height="7.600" viewBox="0 0 5.500 7.600"><path d="M0 0L5.500 3.800 0 7.600z" fill="#9aa0a6"/></svg><div class="ln mono" style="left:924.4px;top:287.33px"><span class="tg">&lt;div <span class="an">class</span>=&quot;<span class="av">logo-header</span>&quot;&gt;</span><span>…</span><span class="tg">&lt;/div&gt;</span></div>
<svg class="abs" style="left:915.0px;top:308.9px" width="7" height="5.400" viewBox="0 0 7 5.400"><path d="M0 0h7L3.500 5.400z" fill="#9aa0a6"/></svg><div class="ln mono" style="left:924.4px;top:304.61px"><span class="tg">&lt;div <span class="an">class</span>=&quot;<span class="av">left</span>&quot; <span class="an">id</span>=&quot;<span class="av">leftdiv</span>&quot;&gt;</span></div>
<svg class="abs" style="left:928.0px;top:325.0px" width="5.500" height="7.600" viewBox="0 0 5.500 7.600"><path d="M0 0L5.500 3.800 0 7.600z" fill="#9aa0a6"/></svg><div class="ln mono" style="left:936.4px;top:321.89px"><span class="tg">&lt;h3 <span class="an">class</span>=&quot;<span class="av">default-header newlogintext</span>&quot;&gt;</span><span>…</span><span class="tg">&lt;/h3&gt;</span></div>
<div class="ln mono" style="left:936.4px;top:339.17px"><span class="tg">&lt;p <span class="an">class</span>=&quot;<span class="av">login-tips-textinfo</span>&quot; <span class="an">style</span>=&quot;<span class="av">position:absolute;left:90px;top:105px;color:#A8A8B3;font-si</span></span></div>
<svg class="abs" style="left:927.0px;top:360.7px" width="7" height="5.400" viewBox="0 0 7 5.400"><path d="M0 0h7L3.500 5.400z" fill="#9aa0a6"/></svg><div class="ln mono" style="left:936.4px;top:356.45px"><span class="tg">&lt;form <span class="an">id</span>=&quot;<span class="av">loginForm</span>&quot; <span class="an">method</span>=&quot;<span class="av">post</span>&quot;&gt;</span></div>
<div class="ln mono" style="left:948.4px;top:373.73px"><span class="tg">&lt;input <span class="an">type</span>=&quot;<span class="av">hidden</span>&quot; <span class="an">id</span>=&quot;<span class="av">t</span>&quot; <span class="an">name</span>=&quot;<span class="av">t</span>&quot; <span class="an">value</span>&gt;</span></div>
<div class="ln mono" style="left:948.4px;top:391.01px"><span class="tg">&lt;input <span class="an">type</span>=&quot;<span class="av">hidden</span>&quot; <span class="an">id</span>=&quot;<span class="av">logintype</span>&quot; <span class="an">name</span>=&quot;<span class="av">logintype</span>&quot; <span class="an">value</span>&gt;</span></div>
<div class="ln mono" style="left:948.4px;top:408.29px"><span class="tg">&lt;input <span class="an">type</span>=&quot;<span class="av">hidden</span>&quot; <span class="an">id</span>=&quot;<span class="av">fid</span>&quot; <span class="an">name</span>=&quot;<span class="av">fid</span>&quot; <span class="an">value</span>=&quot;<span class="av">-1</span>&quot;&gt;</span></div>
<div class="ln mono" style="left:948.4px;top:425.57px"><span class="tg">&lt;input <span class="an">type</span>=&quot;<span class="av">hidden</span>&quot; <span class="an">id</span>=&quot;<span class="av">ver</span>&quot; <span class="an">name</span>=&quot;<span class="av">ver</span>&quot; <span class="an">value</span>=&quot;<span class="av">v2</span>&quot;&gt;</span></div>
<div class="ln mono" style="left:948.4px;top:442.85px"><span class="tg">&lt;input <span class="an">type</span>=&quot;<span class="av">hidden</span>&quot; <span class="an">id</span>=&quot;<span class="av">refer</span>&quot; <span class="an">name</span>=&quot;<span class="av">refer</span>&quot; <span class="an">value</span>=&quot;<span class="av">https%3A%2F%2Fi.chaoxing.com</span>&quot;&gt;</span></div>
<div class="ln mono" style="left:948.4px;top:460.13px"><span class="tg">&lt;input <span class="an">type</span>=&quot;<span class="av">hidden</span>&quot; <span class="an">id</span>=&quot;<span class="av">forbidotherlogin</span>&quot; <span class="an">name</span>=&quot;<span class="av">forbidotherlogin</span>&quot; <span class="an">value</span>=&quot;<span class="av">0</span>&quot;&gt;</span></div>
<div class="ln mono" style="left:948.4px;top:477.41px"><span class="tg">&lt;input <span class="an">type</span>=&quot;<span class="av">hidden</span>&quot; <span class="an">id</span>=&quot;<span class="av">doubleFactorLogin</span>&quot; <span class="an">value</span>&gt;</span></div>
<div class="ln mono" style="left:948.4px;top:494.69px"><span class="tg">&lt;input <span class="an">type</span>=&quot;<span class="av">hidden</span>&quot; <span class="an">id</span>=&quot;<span class="av">independentId</span>&quot; <span class="an">value</span>&gt;</span></div>
<div class="ln mono" style="left:948.4px;top:511.97px"><span class="tg">&lt;input <span class="an">type</span>=&quot;<span class="av">hidden</span>&quot; <span class="an">id</span>=&quot;<span class="av">independentNameId</span>&quot;&gt;</span></div>
<div class="ln mono" style="left:948.4px;top:529.25px"><span class="tg">&lt;input <span class="an">type</span>=&quot;<span class="av">hidden</span>&quot; <span class="an">id</span>=&quot;<span class="av">newtnara</span>&quot; <span class="an">value</span>=&quot;<span class="av">0</span>&quot;&gt;</span></div>
<div class="ln mono" style="left:948.4px;top:546.53px"><span class="tg">&lt;input <span class="an">type</span>=&quot;<span class="av">hidden</span>&quot; <span class="an">id</span>=&quot;<span class="av">accounttip</span>&quot; <span class="an">value</span>&gt;</span></div>
<div class="ln mono" style="left:948.4px;top:563.81px"><span class="tg">&lt;input <span class="an">type</span>=&quot;<span class="av">hidden</span>&quot; <span class="an">id</span>=&quot;<span class="av">pwdtip</span>&quot; <span class="an">value</span>&gt;</span></div>
<div class="ln mono" style="left:948.4px;top:581.09px"><span class="tg">&lt;input <span class="an">type</span>=&quot;<span class="av">hidden</span>&quot; <span class="an">id</span>=&quot;<span class="av">quick</span>&quot; <span class="an">value</span>=&quot;<span class="av">0</span>&quot;&gt;</span></div>
<div class="ln mono" style="left:948.4px;top:598.37px"><span class="tg">&lt;input <span class="an">type</span>=&quot;<span class="av">hidden</span>&quot; <span class="an">name</span>=&quot;<span class="av">shownotice</span>&quot; <span class="an">id</span>=&quot;<span class="av">shownotice</span>&quot; <span class="an">value</span>=&quot;<span class="av">1</span>&quot;&gt;</span></div>
<div class="ln mono" style="left:948.4px;top:615.65px"><span class="tg">&lt;input <span class="an">type</span>=&quot;<span class="av">hidden</span>&quot; <span class="an">id</span>=&quot;<span class="av">hidecompletephone</span>&quot; <span class="an">name</span>=&quot;<span class="av">hidecompletephone</span>&quot; <span class="an">value</span>=&quot;<span class="av">0</span>&quot;&gt;</span></div>
<div class="ln mono" style="left:948.4px;top:632.93px"><span class="cm">&lt;!--<span class="cj">手</span><span class="cj">机</span><span class="cj">号</span>--&gt;</span></div>
<svg class="abs" style="left:939.0px;top:654.5px" width="7" height="5.400" viewBox="0 0 7 5.400"><path d="M0 0h7L3.500 5.400z" fill="#9aa0a6"/></svg><div class="ln mono" style="left:948.4px;top:650.21px"><span class="tg">&lt;div <span class="an">class</span>=&quot;<span class="av">lg-item icon-tel margin-btm24</span>&quot;&gt;</span></div>
<div class="ln mono" style="left:960.4px;top:667.49px"><span class="cm">&lt;!--<span class="cj">手</span><span class="cj">机</span><span class="cj">号</span><span class="cj">输</span><span class="cj">入</span>--&gt;</span></div>
<div class="ln mono" style="left:960.4px;top:684.77px"><span class="tg">&lt;input <span class="an">type</span>=&quot;<span class="av">text</span>&quot; <span class="an">class</span>=&quot;<span class="av">ipt-tel</span>&quot; <span class="an">placeholder</span>=&quot;<span class="av"><span class="cj">手</span><span class="cj">机</span><span class="cj">号</span>/<span class="cj">超</span><span class="cj">星</span><span class="cj">号</span></span>&quot; <span class="an">id</span>=&quot;<span class="av">phone</span>&quot; <span class="an">maxlength</span>=&quot;<span class="av">50</span>&quot;&gt;</span></div>
<div class="ln mono" style="left:960.4px;top:719.33px"><span class="tg">&lt;p <span class="an">class</span>=&quot;<span class="av">err-txt</span>&quot; <span class="an">id</span>=&quot;<span class="av">phoneMsg</span>&quot;&gt;</span><span class="tg">&lt;/p&gt;</span></div>
<div class="ln mono" style="left:948.4px;top:736.61px"><span class="tg">&lt;/div&gt;</span></div>
<div class="ln mono" style="left:948.4px;top:753.89px"><span class="cm">&lt;!--<span class="cj">密</span><span class="cj">码</span>--&gt;</span></div>
<svg class="abs" style="left:940.0px;top:774.3px" width="5.500" height="7.600" viewBox="0 0 5.500 7.600"><path d="M0 0L5.500 3.800 0 7.600z" fill="#9aa0a6"/></svg><div class="ln mono" style="left:948.4px;top:771.17px"><span class="tg">&lt;div <span class="an">class</span>=&quot;<span class="av">lg-item item-pwd icon-pwd</span>&quot;&gt;</span><span>…</span><span class="tg">&lt;/div&gt;</span></div>
<div class="ln mono" style="left:948.4px;top:788.45px"><span class="tg">&lt;input <span class="an">type</span>=&quot;<span class="av">hidden</span>&quot; <span class="an">name</span>=&quot;<span class="av">validate</span>&quot; <span class="an">id</span>=&quot;<span class="av">validate</span>&quot;&gt;</span></div>
<div class="ln mono" style="left:948.4px;top:805.73px"><span class="cm">&lt;!--<span class="cj">按</span><span class="cj">钮</span><span class="cj">不</span><span class="cj">可</span><span class="cj">点</span><span class="cj">击</span> <span class="cj">加</span><span class="cj">上</span>class: disable --&gt;</span></div>
<svg class="abs" style="left:940.0px;top:826.2px" width="5.500" height="7.600" viewBox="0 0 5.500 7.600"><path d="M0 0L5.500 3.800 0 7.600z" fill="#9aa0a6"/></svg><div class="ln mono" style="left:948.4px;top:823.01px"><span class="tg">&lt;div <span class="an">class</span>=&quot;<span class="av">btns-box</span>&quot;&gt;</span><span>…</span><span class="tg">&lt;/div&gt;</span></div>
<div class="ln mono" style="left:936.4px;top:840.29px"><span class="tg">&lt;/form&gt;</span></div>
<svg class="abs" style="left:928.0px;top:860.7px" width="5.500" height="7.600" viewBox="0 0 5.500 7.600"><path d="M0 0L5.500 3.800 0 7.600z" fill="#9aa0a6"/></svg><div class="ln mono" style="left:936.4px;top:857.57px"><span class="tg">&lt;div <span class="an">class</span>=&quot;<span class="av">clearaft fs14 pd-lr-24</span>&quot;&gt;</span><span>…</span><span class="tg">&lt;/div&gt;</span></div>
<svg class="abs" style="left:928.0px;top:878.0px" width="5.500" height="7.600" viewBox="0 0 5.500 7.600"><path d="M0 0L5.500 3.800 0 7.600z" fill="#9aa0a6"/></svg><div class="ln mono" style="left:936.4px;top:874.85px"><span class="tg">&lt;div <span class="an">class</span>=&quot;<span class="av">line</span>&quot;&gt;</span><span>…</span><span class="tg">&lt;/div&gt;</span></div>
<svg class="abs" style="left:928.0px;top:895.3px" width="5.500" height="7.600" viewBox="0 0 5.500 7.600"><path d="M0 0L5.500 3.800 0 7.600z" fill="#9aa0a6"/></svg><div class="ln mono" style="left:936.4px;top:892.13px"><span class="tg">&lt;p <span class="an">class</span>=&quot;<span class="av">Agreement</span>&quot;&gt;</span><span>…</span><span class="tg">&lt;/p&gt;</span></div>
<div class="ln mono" style="left:924.4px;top:909.41px"><span class="tg">&lt;/div&gt;</span></div>
<svg class="abs" style="left:916.0px;top:929.8px" width="5.500" height="7.600" viewBox="0 0 5.500 7.600"><path d="M0 0L5.500 3.800 0 7.600z" fill="#9aa0a6"/></svg><div class="ln mono" style="left:924.4px;top:926.69px"><span class="tg">&lt;style&gt;</span><span>…</span><span class="tg">&lt;/style&gt;</span></div>
<svg class="abs" style="left:916.0px;top:947.1px" width="5.500" height="7.600" viewBox="0 0 5.500 7.600"><path d="M0 0L5.500 3.800 0 7.600z" fill="#9aa0a6"/></svg><div class="ln mono" style="left:924.4px;top:943.97px"><span class="tg">&lt;div <span class="an">class</span>=&quot;<span class="av">right</span>&quot; <span class="an">id</span>=&quot;<span class="av">rightdiv</span>&quot;&gt;</span><span>…</span><span class="tg">&lt;/div&gt;</span></div>
<svg class="abs" style="left:916.0px;top:964.4px" width="5.500" height="7.600" viewBox="0 0 5.500 7.600"><path d="M0 0L5.500 3.800 0 7.600z" fill="#9aa0a6"/></svg><div class="ln mono" style="left:924.4px;top:961.25px"><span class="tg">&lt;script&gt;</span><span>…</span><span class="tg">&lt;/script&gt;</span></div>
<div class="ln mono" style="left:912.4px;top:978.53px"><span class="tg">&lt;/div&gt;</span></div>
<div class="ln mono" style="left:912.4px;top:995.81px"><span class="cm">&lt;!--<span class="cj">默</span><span class="cj">认</span><span class="cj">登</span><span class="cj">录</span> end--&gt;</span></div>
<div class="ln mono" style="left:966px;top:702.05px;color:#a5a5a5">== <span class="it">$0</span></div>
<div class="abs" style="left:853px;top:692.2px;width:2px;height:2px;border-radius:1px;background:#9aa0a6"></div>
<div class="abs" style="left:857px;top:692.2px;width:2px;height:2px;border-radius:1px;background:#9aa0a6"></div>
<div class="abs" style="left:861px;top:692.2px;width:2px;height:2px;border-radius:1px;background:#9aa0a6"></div>
</div></div>
<div class="abs" style="left:1578px;top:129px;width:17px;height:879px;background:#424242"></div>
<div class="abs" style="left:1580px;top:146px;width:13px;height:701px;background:#6b6b6b"></div>
<svg class="abs" style="left:1582px;top:135px" width="9" height="6" viewBox="0 0 9 6"><path d="M0 5.500h9L4.500.5z" fill="#9e9e9e"/></svg>
<svg class="abs" style="left:1582px;top:996px" width="9" height="6" viewBox="0 0 9 6"><path d="M0 .5h9L4.500 5.500z" fill="#e0e0e0"/></svg>
<div class="abs" style="left:1595px;top:129px;width:1px;height:903px;background:#494a4d"></div>
<div class="abs" style="left:850px;top:1008px;width:745px;height:1px;background:#494a4d"></div>
<div class="abs" style="left:850px;top:1009px;width:745px;height:23px;background:#202124"></div>
<div class="abs" style="left:850px;top:1009px;width:29px;height:23px;background:#292a2d"></div>
<div class="abs" style="left:1566px;top:1009px;width:29px;height:23px;background:#292a2d"></div>
<span class="t" style="left:858.3px;top:1010.0px;font-size:14px;line-height:18px;color:#9aa0a6;letter-spacing:0.34px;">...</span>
<span class="t" style="left:1574.5px;top:1010.0px;font-size:14px;line-height:18px;color:#9aa0a6;letter-spacing:0.28px;">...</span>
<span class="t" style="left:886.3px;top:1011.5px;font-size:12px;line-height:18px;color:#d5dce6;letter-spacing:0.31px;"><span style="color:#5db0d7">html</span></span>
<span class="t" style="left:924.6px;top:1011.5px;font-size:12px;line-height:18px;color:#d5dce6;letter-spacing:0.14px;"><span style="color:#5db0d7">body</span></span>
<span class="t" style="left:965.6px;top:1011.5px;font-size:12px;line-height:18px;color:#d5dce6;letter-spacing:0.12px;"><span style="color:#5db0d7">div</span><span style="color:#d5dce6">.lg-container</span></span>
<span class="t" style="left:1062.5px;top:1011.5px;font-size:12px;line-height:18px;color:#d5dce6;letter-spacing:0.12px;"><span style="color:#5db0d7">div</span><span style="color:#d5dce6">.main.default-login-main</span></span>
<span class="t" style="left:1222.7px;top:1011.5px;font-size:12px;line-height:18px;color:#d5dce6;letter-spacing:0.18px;"><span style="color:#5db0d7">div</span><span style="color:#d5dce6">.default-login</span></span>
<span class="t" style="left:1323.4px;top:1011.5px;font-size:12px;line-height:18px;color:#d5dce6;letter-spacing:0.20px;"><span style="color:#5db0d7">div</span><span style="color:#ffffff">#leftdiv.left</span></span>
<span class="t" style="left:1412.9px;top:1011.5px;font-size:12px;line-height:18px;color:#d5dce6;letter-spacing:0.15px;"><span style="color:#5db0d7">form</span></span>
<div class="abs" style="left:1452px;top:1009px;width:114px;height:23px;overflow:hidden">
<span class="t" style="left:0.0px;top:2.5px;font-size:12px;line-height:18px;color:#d5dce6;letter-spacing:0.11px;"><span style="color:#5db0d7">div</span>.lg-item.icon-tel.margin</span>
</div>
<div class="abs" style="left:1596px;top:129px;width:324px;height:26px;background:#292a2d"></div>
<div class="abs" style="left:1596px;top:129px;width:50px;height:26px;background:#000"></div>
<div class="abs" style="left:1596px;top:155px;width:324px;height:1px;background:#494a4d"></div>
<span class="t" style="left:1605.5px;top:133.5px;font-size:12px;line-height:18px;color:#ffffff;letter-spacing:-0.36px;">Styles</span>
<span class="t" style="left:1655.7px;top:133.5px;font-size:12px;line-height:18px;color:#9aa0a6;letter-spacing:0.03px;">Computed</span>
<span class="t" style="left:1731.7px;top:133.5px;font-size:12px;line-height:18px;color:#9aa0a6;letter-spacing:-0.12px;">Layout</span>
<span class="t" style="left:1786.6px;top:133.5px;font-size:12px;line-height:18px;color:#9aa0a6;letter-spacing:-0.29px;">Event Listeners</span>
<svg class="abs" style="left:1884px;top:138px" width="9" height="8" viewBox="0 0 9 8"><path d="M.7.700L4 4 .7 7.300M5 .700L8.300 4 5 7.300" fill="none" stroke="#9aa0a6" stroke-width="1.100"/></svg>
<div class="abs" style="left:1596px;top:156px;width:307px;height:26px;background:#292a2d"></div>
<div class="abs" style="left:1599px;top:159px;width:168px;height:20px;background:#202124"></div>
<span class="t" style="left:1603.3px;top:160.5px;font-size:12px;line-height:18px;color:#9aa0a6;letter-spacing:-0.08px;">Filter</span>
<div class="sl mono" style="left:1777.500px;top:162px;color:#9aa0a6;font-size:11.500px">:hov</div>
<div class="sl mono" style="left:1813.500px;top:162px;color:#9aa0a6;font-size:11.500px">.cls</div>
<svg class="abs" style="left:1854px;top:164px" width="11" height="11" viewBox="0 0 11 11"><path d="M5.500 0v11M0 5.500h11" stroke="#9aa0a6" stroke-width="1.400"/></svg>
<svg class="abs" style="left:1864px;top:174px" width="5" height="5" viewBox="0 0 5 5"><path d="M5 0v5H0z" fill="#9aa0a6"/></svg>
<svg class="abs" style="left:1879px;top:163px" width="15" height="13" viewBox="0 0 15 13"><rect x=".6" y=".6" width="13.800" height="11.800" fill="none" stroke="#9aa0a6" stroke-width="1.200"/><path d="M10.600 .6v11.800" stroke="#9aa0a6" stroke-width="1.200"/><path d="M8 3.300v6.400L3.400 6.500z" fill="#9aa0a6"/></svg>
<div class="abs" style="left:1596px;top:182px;width:307px;height:1px;background:#494a4d"></div>
<div class="abs" style="left:1903px;top:156px;width:17px;height:876px;background:#424242"></div>
<div class="abs" style="left:1905px;top:173px;width:13px;height:405px;background:#6b6b6b"></div>
<svg class="abs" style="left:1907px;top:162px" width="9" height="6" viewBox="0 0 9 6"><path d="M0 5.500h9L4.500.5z" fill="#9e9e9e"/></svg>
<svg class="abs" style="left:1907px;top:1019px" width="9" height="6" viewBox="0 0 9 6"><path d="M0 .5h9L4.500 5.500z" fill="#e8e8e8"/></svg>
<div class="abs" style="left:1596px;top:183px;width:307px;height:849px;overflow:hidden">
<div class="abs" style="left:-1596px;top:-183px;width:1920px;height:1080px">
<div class="abs" style="left:1596px;top:219px;width:307px;height:1px;background:#494a4d"></div>
<div class="abs" style="left:1596px;top:423px;width:307px;height:1px;background:#494a4d"></div>
<div class="abs" style="left:1596px;top:488px;width:307px;height:1px;background:#494a4d"></div>
<div class="abs" style="left:1596px;top:567px;width:307px;height:1px;background:#494a4d"></div>
<div class="abs" style="left:1596px;top:660px;width:307px;height:1px;background:#494a4d"></div>
<div class="abs" style="left:1596px;top:725px;width:307px;height:1px;background:#494a4d"></div>
<div class="abs" style="left:1596px;top:874px;width:307px;height:1px;background:#494a4d"></div>
<div class="abs" style="left:1596px;top:925px;width:307px;height:1px;background:#494a4d"></div>
<div class="sl mono " style="left:1600.4px;top:186.1px"><span class="gy">element.style</span> {</div>
<div class="sl mono " style="left:1600.4px;top:203.1px">}</div>
<div class="sl mono " style="left:1600.4px;top:223.1px">.lg-container .lg-item input {</div>
<div class="sl mono" style="right:18.5px;top:223.1px"><span class="lk">login.css:270</span></div>
<div class="sl mono " style="left:1618.2px;top:239.1px"><span class="pn">width</span>: 100%;</div>
<div class="sl mono " style="left:1618.2px;top:253.1px"><span class="pn">height</span>: 48px;</div>
<div class="sl mono " style="left:1618.2px;top:267.1px"><span class="pn">vertical-align</span>: top;</div>
<div class="sl mono " style="left:1618.2px;top:281.1px"><span class="pn">background</span>:<span class="tri"></span><span class="sw" style="background:#fff"></span>#FFFFFF;</div>
<div class="sl mono " style="left:1618.2px;top:295.1px"><span class="pn">border</span>:<span class="tri"></span>1px solid <span class="sw" style="background:#E3E8F0"></span>#E3E8F0;</div>
<div class="sl mono " style="left:1618.2px;top:309.1px"><span class="pn">outline</span>:<span class="tri"></span>none;</div>
<div class="sl mono " style="left:1618.2px;top:323.1px"><span class="pn">font-size</span>: 14px;</div>
<div class="sl mono " style="left:1618.2px;top:337.1px"><span class="st"><span class="pn">color</span>: <span class="sw" style="background:#181E33"></span>#181E33;</span></div>
<div class="sl mono " style="left:1618.2px;top:351.1px"><span class="st"><span class="pn">-webkit-border-radius</span>: 24px;</span></div>
<div class="sl mono " style="left:1618.2px;top:365.1px"><span class="pn">border-radius</span>:<span class="tri"></span>24px;</div>
<div class="sl mono " style="left:1618.2px;top:379.1px"><span class="pn">padding</span>:<span class="tri"></span>0 24px 0 54px;</div>
<div class="sl mono " style="left:1618.2px;top:393.1px"><span class="pn">box-sizing</span>: border-box;</div>
<div class="sl mono " style="left:1600.4px;top:407.3px">}</div>
<div class="sl mono " style="left:1600.4px;top:428.1px">input:-webkit-autofill {</div>
<div class="sl mono" style="right:18.5px;top:428.1px"><span class="lk">login.css:854</span></div>
<div class="sl mono " style="left:1618.2px;top:444.1px"><span class="pn">-webkit-box-shadow</span>:</div>
<div class="sl mono " style="left:1639.0px;top:458.1px"><svg width="9" height="9" viewBox="0 0 9 9" style="vertical-align:-1px;margin-right:2.600px"><rect x="2.500" y="2.500" width="6" height="6" fill="#9aa0a6"/><rect x=".5" y=".5" width="6" height="6" fill="#202124" stroke="#9aa0a6"/></svg>0 0 0 1000px <span class="sw" style="background:#f7f8fa"></span>#f7f8fa inset !important;</div>
<div class="sl mono " style="left:1600.4px;top:472.1px">}</div>
<div class="sl mono " style="left:1600.4px;top:493.1px">input {</div>
<div class="sl mono" style="right:18.5px;top:493.1px"><span class="lk">login.css:11</span></div>
<div class="sl mono " style="left:1618.2px;top:509.1px"><span class="st"><span style="color:#9aa0a6"><span class="pn gy" style=color:#9aa0a6>-moz-appearance</span>: button;</span></span></div>
<div class="sl mono " style="left:1618.2px;top:523.1px"><span class="st"><span class="pn">-webkit-appearance</span>: button;</span></div>
<div class="sl mono " style="left:1618.2px;top:537.1px"><span class="pn">appearance</span>: button;</div>
<div class="sl mono " style="left:1600.4px;top:551.1px">}</div>
<div class="sl mono " style="left:1600.4px;top:572.1px">input, <span class="gy">select, textarea</span> {</div>
<div class="sl mono" style="right:18.5px;top:572.1px"><span class="lk">common.css:32</span></div>
<div class="sl mono " style="left:1618.2px;top:588.1px"><span class="st"><span class="pn">vertical-align</span>: middle;</span></div>
<div class="sl mono " style="left:1618.2px;top:602.1px"><span class="st"><span class="pn">color</span>: <span class="sw" style="background:#000"></span>#000;</span></div>
<div class="sl mono " style="left:1618.2px;top:616.1px"><span class="st"><span class="pn">border</span>:<span class="tri"></span>none;</span></div>
<div class="sl mono " style="left:1618.2px;top:630.1px"><span class="st"><span class="pn">border</span>:<span class="tri"></span>0;</span></div>
<div class="sl mono " style="left:1600.4px;top:644.1px">}</div>
<div class="sl mono " style="left:1600.4px;top:665.1px">* {</div>
<div class="sl mono" style="right:18.5px;top:665.1px"><span class="lk">common.css:3</span></div>
<div class="sl mono " style="left:1618.2px;top:681.1px"><span class="pn">margin</span>:<span class="tri"></span>0;</div>
<div class="sl mono " style="left:1618.2px;top:695.1px"><span class="st"><span class="pn">padding</span>:<span class="tri"></span>0;</span></div>
<div class="sl mono " style="left:1600.4px;top:709.1px">}</div>
<div class="sl mono it" style="left:1600.4px;top:730.1px">input:-internal-</div>
<div class="sl mono" style="right:18.5px;top:730.1px"><span class="ua">user agent stylesheet</span></div>
<div class="sl mono it" style="left:1600.4px;top:744.1px">autofill-selected {</div>
<div class="sl mono it" style="left:1618.2px;top:760.1px"><span class="st"><span class="pn">appearance</span>: menulist-button;</span></div>
<div class="sl mono it" style="left:1618.2px;top:774.1px"><span class="pn">background-image</span>: none !important;</div>
<div class="sl mono it" style="left:1618.2px;top:788.1px"><span class="pn">background-color</span>: -internal-light-dark(</div>
<div class="sl mono it" style="left:1638.0px;top:802.1px"><span class="sw" style="background:rgb(232,240,254)"></span>rgb(232, 240, 254),</div>
<div class="sl mono it" style="left:1638.0px;top:816.1px"><span class="sw" style="background:linear-gradient(rgba(70,90,126,.400),rgba(70,90,126,.400)),repeating-conic-gradient(#777 0 25%,#bbb 0 50%) 0 0/4px 4px"></span>rgba(70, 90, 126, 0.4)) !important;</div>
<div class="sl mono it" style="left:1618.2px;top:830.1px"><span class="pn">color</span>: -internal-light-dark(<span class="sw" style="background:#000"></span>black,</div>
<div class="sl mono it" style="left:1638.0px;top:844.1px"><span class="sw" style="background:#fff"></span>white) !important;</div>
<div class="sl mono it" style="left:1600.4px;top:858.1px">}</div>
<div class="sl mono it" style="left:1600.4px;top:879.1px">input[type="text" i] {</div>
<div class="sl mono" style="right:18.5px;top:879.1px"><span class="ua">user agent stylesheet</span></div>
<div class="sl mono it" style="left:1618.2px;top:895.1px"><span class="st"><span class="pn">padding</span>:<span class="tri"></span>1px 2px;</span></div>
<div class="sl mono it" style="left:1600.4px;top:909.1px">}</div>
<div class="sl mono it" style="left:1600.4px;top:930.1px">input {</div>
<div class="sl mono" style="right:18.5px;top:930.1px"><span class="ua">user agent stylesheet</span></div>
<div class="sl mono it" style="left:1618.2px;top:946.1px"><span class="pn">writing-mode</span>: horizontal-tb !important;</div>
<div class="sl mono it" style="left:1618.2px;top:960.1px"><span class="pn">font-style</span>: ;</div>
<div class="sl mono it" style="left:1618.2px;top:974.1px"><span class="pn">font-variant-ligatures</span>: ;</div>
<div class="sl mono it" style="left:1618.2px;top:988.1px"><span class="pn">font-variant-caps</span>: ;</div>
<div class="sl mono it" style="left:1618.2px;top:1002.1px"><span class="pn">font-variant-numeric</span>: ;</div>
<div class="sl mono it" style="left:1618.2px;top:1016.1px"><span class="pn">font-variant-east-asian</span>: ;</div>
<div class="sl mono it" style="left:1618.2px;top:1030.1px"><span class="pn">font-weight</span>: ;</div>
</div></div>
<!-- menus -->
<div class="abs" style="left:919px;top:206px;width:203px;height:491px;border-radius:8px;background:#292a2d;box-shadow:0 2px 10px rgba(0,0,0,.55),0 0 0 .5px rgba(0,0,0,.35)"></div>
<div class="abs" style="left:919px;top:345px;width:203px;height:24px;background:#3f4042"></div>
<div class="abs" style="left:919px;top:315px;width:203px;height:1px;background:#47484b"></div>
<div class="abs" style="left:919px;top:398px;width:203px;height:1px;background:#47484b"></div>
<div class="abs" style="left:919px;top:481px;width:203px;height:1px;background:#47484b"></div>
<div class="abs" style="left:919px;top:660px;width:203px;height:1px;background:#47484b"></div>
<span class="t" style="left:955.0px;top:217.7px;font-size:13px;line-height:18px;color:#f1f3f4;letter-spacing:0.25px;">Add attribute</span>
<span class="t" style="left:955.0px;top:241.7px;font-size:13px;line-height:18px;color:#f1f3f4;letter-spacing:-0.27px;">Edit as HTML</span>
<span class="t" style="left:955.0px;top:265.7px;font-size:13px;line-height:18px;color:#f1f3f4;letter-spacing:0.06px;">Duplicate element</span>
<span class="t" style="left:955.0px;top:289.7px;font-size:13px;line-height:18px;color:#f1f3f4;">Delete element</span>
<span class="t" style="left:955.0px;top:324.7px;font-size:13px;line-height:18px;color:#f1f3f4;letter-spacing:-0.08px;">Cut</span>
<span class="t" style="left:955.0px;top:348.7px;font-size:13px;line-height:18px;color:#f1f3f4;letter-spacing:-0.09px;">Copy</span>
<span class="t" style="left:955.0px;top:372.7px;font-size:13px;line-height:18px;color:#8f9296;letter-spacing:-0.55px;">Paste</span>
<span class="t" style="left:955.0px;top:407.7px;font-size:13px;line-height:18px;color:#f1f3f4;letter-spacing:0.07px;">Hide element</span>
<span class="t" style="left:955.0px;top:431.7px;font-size:13px;line-height:18px;color:#f1f3f4;letter-spacing:-0.23px;">Force state</span>
<span class="t" style="left:955.0px;top:455.7px;font-size:13px;line-height:18px;color:#f1f3f4;letter-spacing:-0.19px;">Break on</span>
<span class="t" style="left:955.0px;top:490.7px;font-size:13px;line-height:18px;color:#f1f3f4;letter-spacing:-0.18px;">Expand recursively</span>
<span class="t" style="left:955.0px;top:514.7px;font-size:13px;line-height:18px;color:#f1f3f4;letter-spacing:-0.07px;">Collapse children</span>
<span class="t" style="left:955.0px;top:538.7px;font-size:13px;line-height:18px;color:#f1f3f4;letter-spacing:-0.09px;">Capture node screenshot</span>
<span class="t" style="left:955.0px;top:562.7px;font-size:13px;line-height:18px;color:#f1f3f4;letter-spacing:0.02px;">Scroll into view</span>
<span class="t" style="left:955.0px;top:586.7px;font-size:13px;line-height:18px;color:#f1f3f4;letter-spacing:-0.48px;">Focus</span>
<span class="t" style="left:955.0px;top:610.7px;font-size:13px;line-height:18px;color:#f1f3f4;letter-spacing:0.04px;">Enter Isolation Mode</span>
<span class="t" style="left:955.0px;top:634.7px;font-size:13px;line-height:18px;color:#f1f3f4;letter-spacing:-0.14px;">Badge settings...</span>
<span class="t" style="left:955.0px;top:669.7px;font-size:13px;line-height:18px;color:#f1f3f4;letter-spacing:-0.12px;">Store as global variable</span>
<svg class="abs" style="left:1109px;top:353px" width="5" height="8" viewBox="0 0 5 8"><path d="M0 0l5 4-5 4z" fill="#c8cacd"/></svg>
<svg class="abs" style="left:1109px;top:436px" width="5" height="8" viewBox="0 0 5 8"><path d="M0 0l5 4-5 4z" fill="#c8cacd"/></svg>
<svg class="abs" style="left:1109px;top:460px" width="5" height="8" viewBox="0 0 5 8"><path d="M0 0l5 4-5 4z" fill="#c8cacd"/></svg>
<div class="abs" style="left:1122px;top:346px;width:157px;height:194px;border-radius:8px;background:#292a2d;box-shadow:0 2px 10px rgba(0,0,0,.55),0 0 0 .5px rgba(0,0,0,.35)"></div>
<div class="abs" style="left:1122px;top:508px;width:157px;height:24px;background:#3f4042"></div>
<div class="abs" style="left:1122px;top:382px;width:157px;height:1px;background:#47484b"></div>
<span class="t" style="left:1158.0px;top:356.7px;font-size:13px;line-height:18px;color:#f1f3f4;letter-spacing:-0.02px;">Copy element</span>
<span class="t" style="left:1158.0px;top:391.7px;font-size:13px;line-height:18px;color:#f1f3f4;letter-spacing:-0.07px;">Copy outerHTML</span>
<span class="t" style="left:1158.0px;top:415.7px;font-size:13px;line-height:18px;color:#f1f3f4;letter-spacing:-0.11px;">Copy selector</span>
<span class="t" style="left:1158.0px;top:439.7px;font-size:13px;line-height:18px;color:#f1f3f4;letter-spacing:-0.34px;">Copy JS path</span>
<span class="t" style="left:1158.0px;top:463.7px;font-size:13px;line-height:18px;color:#f1f3f4;letter-spacing:-0.20px;">Copy styles</span>
<span class="t" style="left:1158.0px;top:487.7px;font-size:13px;line-height:18px;color:#f1f3f4;letter-spacing:-0.34px;">Copy XPath</span>
<span class="t" style="left:1158.0px;top:511.7px;font-size:13px;line-height:18px;color:#f1f3f4;letter-spacing:-0.14px;">Copy full XPath</span>
<!-- taskbar -->
<div class="abs" style="left:0;top:1032px;width:1920px;height:48px;background:linear-gradient(90deg,#1d2631 0%,#1c242e 15.600%,#1f2023 19.500%,#1e1f22 21.600%,#1a222b 23.500%,#1b2835 33%,#1b2734 60%,#191e26 70%,#1a1e26 100%)"></div>
<svg class="abs" style="left:773px;top:1044.500px" width="23" height="23" viewBox="0 0 23 23"><defs><linearGradient id="wg" x1="0" y1="0" x2="1" y2="1"><stop offset="0" stop-color="#6ddcff"/><stop offset="1" stop-color="#1a9cf0"/></linearGradient></defs><path d="M0 0h11v11H0zM12 0h11v11H12zM0 12h11v11H0zM12 12h11v11H12z" fill="url(#wg)"/></svg>
<svg class="abs" style="left:817px;top:1044px" width="24" height="24" viewBox="0 0 24 24"><circle cx="14" cy="9.500" r="7.300" fill="#3f4852" stroke="#f3f3f3" stroke-width="2"/><path d="M8.600 15.400L2 22" stroke="#f3f3f3" stroke-width="2.400" stroke-linecap="round"/></svg>
<svg class="abs" style="left:861px;top:1045px" width="24" height="22" viewBox="0 0 24 22"><defs><linearGradient id="tv1" x1="0" y1="0" x2="1" y2="1"><stop offset="0" stop-color="#fff"/><stop offset="1" stop-color="#dcdcdc"/></linearGradient></defs><rect x="6" y="0" width="18" height="16" rx="1.500" fill="url(#tv1)"/><rect x="0" y="6" width="18" height="16" rx="1.500" fill="#7d7d7d" fill-opacity=".78"/></svg>
<svg class="abs" style="left:905px;top:1045px" width="24" height="22" viewBox="0 0 24 22"><path d="M0 2a2 2 0 0 1 2-2h5.500l2.500 2.500H22a2 2 0 0 1 2 2V6H0z" fill="#e8a317"/><rect x="0" y="3.500" width="24" height="18" rx="1.500" fill="#ffd04f"/><path d="M4 21.500v-4.500a2.500 2.500 0 0 1 2.500-2.500h11a2.500 2.500 0 0 1 2.500 2.500v4.500z" fill="#1c8ce3"/><rect x="7" y="17.300" width="10" height="1.600" rx=".8" fill="#1569b8"/></svg>
<svg class="abs" style="left:949px;top:1044px" width="24" height="24" viewBox="0 0 24 24"><path d="M7 5V3a2 2 0 0 1 2-2h6a2 2 0 0 1 2 2v2" fill="none" stroke="#31a8ee" stroke-width="2"/><path d="M.5 5h23v15a3 3 0 0 1-3 3h-17a3 3 0 0 1-3-3z" fill="#fafafa"/><rect x="7.300" y="9.300" width="4.200" height="4.200" fill="#f25022"/><rect x="12.500" y="9.300" width="4.200" height="4.200" fill="#7fba00"/><rect x="7.300" y="14.500" width="4.200" height="4.200" fill="#00a4ef"/><rect x="12.500" y="14.500" width="4.200" height="4.200" fill="#ffb900"/></svg>
<svg class="abs" style="left:993px;top:1044px" width="24" height="24" viewBox="0 0 24 24"><defs><linearGradient id="eg1" x1="0" y1="0" x2="1" y2="0"><stop offset="0" stop-color="#2cb9ea"/><stop offset=".55" stop-color="#3ccf9a"/><stop offset="1" stop-color="#6cd44b"/></linearGradient><linearGradient id="eg2" x1="0" y1="0" x2="0" y2="1"><stop offset="0" stop-color="#1e9be0"/><stop offset="1" stop-color="#1160b5"/></linearGradient><linearGradient id="eg3" x1="0" y1="0" x2="1" y2="1"><stop offset="0" stop-color="#0d56a8"/><stop offset="1" stop-color="#1a72c9"/></linearGradient></defs><path d="M6.360 16.590q0 1.100.270 2.150.270 1.060.780 2.030.510.960 1.240 1.770.740.820 1.660 1.400-1.470-.200-2.800-.740-1.330-.550-2.480-1.370-1.150-.830-2.080-1.900-.920-1.070-1.580-2.330T.360 14.940Q0 13.540 0 12.060q0-.810.320-1.490.310-.680.830-1.230.530-.550 1.200-.960.660-.400 1.350-.660.740-.270 1.500-.390.780-.120 1.550-.120.700 0 1.420.100.720.120 1.400.350.680.230 1.320.570.630.350 1.160.830-.350 0-.700.070-.330.070-.650.230v-.020q-.630.280-1.200.740-.570.460-1.050 1.040-.480.580-.870 1.260-.380.670-.650 1.390-.270.710-.420 1.440-.150.720-.150 1.380z" fill="url(#eg2)"/><path d="M21.860 17.860q.140 0 .250.120.1.130.1.250t-.110.330l-.320.460-.430.530-.440.500q-.210.250-.380.420l-.220.230q-.580.530-1.340 1.040-.760.510-1.600.910-.860.400-1.740.640t-1.670.240q-.9 0-1.690-.280-.8-.280-1.480-.780-.680-.5-1.220-1.170-.530-.660-.920-1.440-.380-.770-.580-1.600-.2-.830-.2-1.670 0-1 .320-1.960.330-.970.870-1.800.140.950.550 1.770.410.820 1.020 1.500.6.680 1.380 1.210.780.540 1.640.9.860.360 1.770.560.920.2 1.800.2 1.120 0 2.180-.240 1.060-.230 2.060-.720l.2-.1.2-.050z" fill="url(#eg3)"/><path d="M11.960.060q1.700 0 3.330.390 1.630.380 3.070 1.150 1.430.770 2.620 1.930 1.180 1.160 1.980 2.700.490.940.760 1.960.280 1 .280 2.080 0 .890-.230 1.700-.240.800-.690 1.480-.450.680-1.100 1.220-.640.530-1.450.880-.540.240-1.110.360-.580.130-1.160.130-.420 0-.970-.030-.540-.030-1.100-.120-.550-.1-1.050-.280-.5-.190-.840-.5-.120-.090-.230-.240-.1-.160-.1-.330 0-.150.160-.350.160-.2.350-.5.2-.280.360-.680.160-.4.160-.950 0-1.060-.4-1.960-.4-.910-1.060-1.640-.660-.740-1.520-1.280-.860-.550-1.790-.890-.840-.3-1.720-.440-.870-.140-1.760-.140-1.550 0-3.060.450T.940 7.550q.710-1.740 1.810-3.130 1.100-1.380 2.520-2.350Q6.680 1.100 8.370.580q1.700-.520 3.580-.520z" fill="url(#eg1)"/></svg>
<div class="abs" style="left:1029px;top:1036px;width:40px;height:40px;box-sizing:border-box;border-radius:4px;background:#2a3541;border:1px solid #343f4b"></div>
<div class="abs" style="left:1041px;top:1072px;width:16px;height:3px;border-radius:1.500px;background:#4cc2ff"></div>
<svg class="abs" style="left:1037.500px;top:1044.500px" width="23" height="23" viewBox="-12 -12 24 24"><circle r="12" fill="#fff"/><path d="M0 0L-10.390-6A12 12 0 0 1 10.390-6z" fill="#e34133"/><path d="M0 0L10.390-6A12 12 0 0 1 0 12z" fill="#f9bc15"/><path d="M0 0L0 12A12 12 0 0 1-10.390-6z" fill="#2da94f"/><path d="M-4.760-2.750L4.760-2.750L10.390-6H0z" fill="#e34133"/><circle r="5.500" fill="#fff"/><circle r="4.400" fill="#4c8bf5"/></svg>
<div class="abs" style="left:1082px;top:1045px;width:22px;height:22px;border-radius:4px;background:#fdfdfd;transform:rotate(-2.500deg)"></div>
<span class="t" style="left:1086.8px;top:1043.5px;font-size:19px;line-height:24px;color:#2a2a2a;font-family:'Liberation Serif',serif;letter-spacing:0.79px;">T</span>
<svg class="abs" style="left:1125px;top:1044px" width="24" height="24" viewBox="0 0 24 24"><path d="M23.150 2.587L18.210.210a1.494 1.494 0 0 0-1.705.290l-9.460 8.630-4.120-3.128a.999.999 0 0 0-1.276.057L.327 7.261A1 1 0 0 0 .326 8.740L3.899 12 .326 15.260a1 1 0 0 0 .001 1.479L1.650 17.940a.999.999 0 0 0 1.276.057l4.120-3.128 9.460 8.630a1.492 1.492 0 0 0 1.704.290l4.942-2.377A1.500 1.500 0 0 0 24 20.060V3.939a1.500 1.500 0 0 0-.850-1.352zm-5.146 14.861L10.826 12l7.178-5.448v10.896z" fill="#0d80d0"/><path d="M18 .150c.400.100.800.350 1 .500l4.150 1.937A1.500 1.500 0 0 1 24 3.939V20.060a1.500 1.500 0 0 1-.850 1.352L18.800 23.600c-.300.150-.550.200-.800.250z" fill="#2aabf2"/></svg>
<div class="abs" style="left:914px;top:1072px;width:6px;height:3px;border-radius:1.500px;background:#8f959c"></div>
<div class="abs" style="left:1090px;top:1072px;width:6px;height:3px;border-radius:1.500px;background:#8f959c"></div>
<div class="abs" style="left:1134px;top:1072px;width:6px;height:3px;border-radius:1.500px;background:#8f959c"></div>
<svg class="abs" style="left:1660px;top:1052px" width="12" height="7" viewBox="0 0 12 7"><path d="M.7 6.300L6 1l5.300 5.300" fill="none" stroke="#f3f3f3" stroke-width="1.200"/></svg>
<div class="abs" style="left:1682px;top:1048px;width:16px;height:16px;box-sizing:border-box;border:1px solid #f0f0f0;background:#0b8c3c"></div>
<span class="t" style="left:1684.3px;top:1049.3px;font-size:11px;line-height:14px;color:#fff8c8;letter-spacing:-0.27px;">24</span>
<span class="t" style="left:1709.7px;top:1047.0px;font-size:15.5px;line-height:20px;color:#ffffff;">中</span>
<svg class="abs" style="left:1742px;top:1049px" width="16" height="13" viewBox="0 0 16 13"><g fill="none" stroke="#f3f3f3" stroke-width="1.200" stroke-linecap="round"><path d="M.8 4.600a10.300 10.300 0 0 1 14.400 0"/><path d="M3 7.100a7.100 7.100 0 0 1 10 0"/><path d="M5.300 9.500a3.900 3.900 0 0 1 5.400 0"/></g><circle cx="8" cy="11.600" r="1.100" fill="#f3f3f3"/></svg>
<svg class="abs" style="left:1766px;top:1050px" width="16" height="12" viewBox="0 0 16 12"><path d="M.6 3.900h2.700L6.900.7v10.600L3.300 8.100H.6z" fill="none" stroke="#f3f3f3" stroke-width="1.100" stroke-linejoin="round"/><path d="M10 3.200l5.600 5.600M15.600 3.200L10 8.800" stroke="#f3f3f3" stroke-width="1.100"/></svg>
<svg class="abs" style="left:1789.500px;top:1048.500px" width="17" height="14" viewBox="0 0 17 14"><rect x="3.600" y="2.400" width="11" height="10" rx="1.600" fill="none" stroke="#f3f3f3" stroke-width="1.200"/><rect x="15.200" y="5.400" width="1.500" height="4" rx=".600" fill="#f3f3f3"/><rect x="5.400" y="4.600" width="7.400" height="5.600" rx=".400" fill="#f3f3f3"/><path d="M-.400 1.800h5.600v3.400a2.800 2.800 0 0 1-1.800 2.600v2.800H1.200V7.800A2.800 2.800 0 0 1-.400 5.200z" fill="#1a1e26"/><path d="M1.300 0v2.400M3.500 0v2.400" stroke="#f3f3f3" stroke-width="1"/><path d="M.3 2.400h4.200v2.400a2.100 2.100 0 0 1-4.200 0z" fill="#f3f3f3"/><path d="M2.400 6.500v3.500" stroke="#f3f3f3" stroke-width="1.100"/></svg>
<span class="t" style="left:1849.7px;top:1040.3px;font-size:12px;line-height:16px;color:#ffffff;letter-spacing:-0.75px;">16:42</span>
<span class="t" style="left:1821.6px;top:1056.3px;font-size:12px;line-height:16px;color:#ffffff;letter-spacing:0.11px;">2022/3/28</span>
<svg class="abs" style="left:1886px;top:1048px" width="14" height="16" viewBox="0 0 14 16"><path d="M8.600 1.300C13.600 4.300 14 12 6.300 14.400 3.900 15.100 1.600 14.300.8 12.700 4.200 12.900 7 9.300 6.100 3.500 5.900 2.100 7.400.8 8.600 1.300z" fill="none" stroke="#f3f3f3" stroke-width="1.300" stroke-linejoin="round"/></svg>
</body>
</html>
